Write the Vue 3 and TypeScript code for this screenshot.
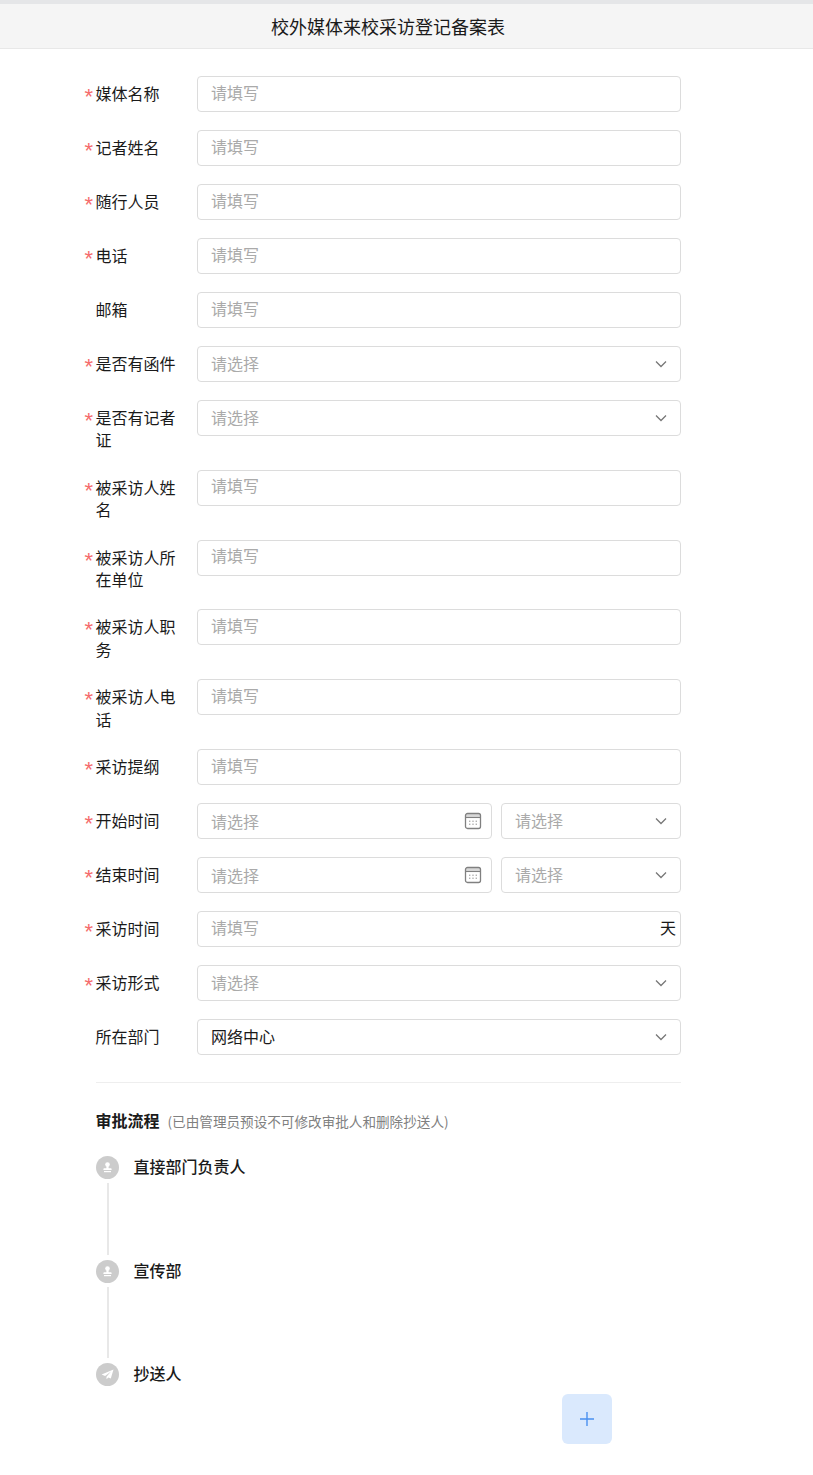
<script setup lang="ts">
type FieldKind = 'input' | 'select' | 'datetime' | 'suffix'

interface Field {
  label: string
  kind: FieldKind
  required?: boolean
  value?: string
}

const fields: Field[] = [
  { label: '媒体名称', kind: 'input', required: true },
  { label: '记者姓名', kind: 'input', required: true },
  { label: '随行人员', kind: 'input', required: true },
  { label: '电话', kind: 'input', required: true },
  { label: '邮箱', kind: 'input' },
  { label: '是否有函件', kind: 'select', required: true },
  { label: '是否有记者证', kind: 'select', required: true },
  { label: '被采访人姓名', kind: 'input', required: true },
  { label: '被采访人所在单位', kind: 'input', required: true },
  { label: '被采访人职务', kind: 'input', required: true },
  { label: '被采访人电话', kind: 'input', required: true },
  { label: '采访提纲', kind: 'input', required: true },
  { label: '开始时间', kind: 'datetime', required: true },
  { label: '结束时间', kind: 'datetime', required: true },
  { label: '采访时间', kind: 'suffix', required: true },
  { label: '采访形式', kind: 'select', required: true },
  { label: '所在部门', kind: 'select', value: '网络中心' }
]

const steps = [
  { name: '直接部门负责人', icon: 'stamp' },
  { name: '宣传部', icon: 'stamp' },
  { name: '抄送人', icon: 'send' }
]
</script>

<template>
  <div class="page">
    <header class="title-bar">校外媒体来校采访登记备案表</header>

    <form class="form" @submit.prevent>
      <div v-for="field in fields" :key="field.label" class="row">
        <label class="label">
          <span v-if="field.required" class="star">*</span>{{ field.label }}
        </label>

        <div class="control">
          <input v-if="field.kind === 'input'" class="box text-input" placeholder="请填写" />

          <div v-else-if="field.kind === 'select'" class="box picker">
            <span :class="field.value ? 'value' : 'hint'">{{ field.value || '请选择' }}</span>
            <svg class="chevron" width="12" height="12" viewBox="0 0 12 12">
              <path d="M1 3.5 6 8.5 11 3.5" fill="none" stroke="#777" stroke-width="1.3" />
            </svg>
          </div>

          <div v-else-if="field.kind === 'suffix'" class="box suffix-box">
            <input class="bare-input" placeholder="请填写" />
            <span class="suffix">天</span>
          </div>

          <div v-else class="date-pair">
            <div class="box picker date">
              <span class="hint date-hint">请选择</span>
              <svg class="calendar" width="18" height="18" viewBox="0 0 18 18">
                <rect x="2" y="2" width="14" height="3.5" fill="#d8d8d8" />
                <rect x="1.5" y="1.5" width="15" height="15" rx="2" fill="none" stroke="#808080" stroke-width="1.3" />
                <path d="M2 5.5h14" stroke="#808080" stroke-width="1.1" />
                <path d="M5 9.2h1.4M8.3 9.2h1.4M11.6 9.2h1.4M5 12.2h1.4M8.3 12.2h1.4M11.6 12.2h1.4" stroke="#909090" stroke-width="1" />
              </svg>
            </div>
            <div class="box picker time">
              <span class="hint">请选择</span>
              <svg class="chevron" width="12" height="12" viewBox="0 0 12 12">
                <path d="M1 3.5 6 8.5 11 3.5" fill="none" stroke="#777" stroke-width="1.3" />
              </svg>
            </div>
          </div>
        </div>
      </div>
    </form>

    <section class="flow">
      <h2 class="flow-title">审批流程<small>(已由管理员预设不可修改审批人和删除抄送人)</small></h2>
      <ul class="steps">
        <li v-for="step in steps" :key="step.name" class="step">
          <span class="dot">
            <svg v-if="step.icon === 'stamp'" width="11" height="11" viewBox="0 0 11 11">
              <circle cx="5.5" cy="2.6" r="2.3" fill="#fff" />
              <path d="M4.6 4h1.8l.3 2.2h2.2c.4 0 .7.3.7.7v1H1.4v-1c0-.4.3-.7.7-.7h2.2Z" fill="#fff" />
              <rect x="2" y="9" width="7" height="1.2" fill="#fff" />
            </svg>
            <svg v-else width="13" height="13" viewBox="0 0 13 13">
              <path d="M12.5 1.5 .6 6.4l3.5 1.5L10 3.6 5.5 8.7v2.6l1.9-1.9 2.4 1.1Z" fill="#fff" />
            </svg>
          </span>
          <span class="step-name">{{ step.name }}</span>
        </li>
      </ul>
    </section>

    <button class="fab" type="button" aria-label="添加">
      <svg width="14" height="14" viewBox="0 0 14 14">
        <path d="M7 0v14M0 7h14" stroke="#4a90f0" stroke-width="1.4" />
      </svg>
    </button>
  </div>
</template>

<style scoped>
* {
  box-sizing: border-box;
}

.page {
  position: relative;
  width: 813px;
  height: 1475px;
  border-top: 4px solid #e5e6e8;
  background: #fff;
  color: #1a1a1a;
  font-family: "Noto Sans CJK SC", "Liberation Sans", sans-serif;
  font-size: 16px;
}

.title-bar {
  height: 45px;
  padding: 0 37px 1px 0;
  border-bottom: 1px solid #e8e8e8;
  background: #f5f5f5;
  font-size: 18px;
  line-height: 44px;
  text-align: center;
}

.form {
  padding: 27px 132px 0 96px;
}

.row {
  display: flex;
  margin-bottom: 18px;
}

.label {
  position: relative;
  flex: none;
  width: 101.5px;
  margin-left: -0.5px;
  padding: 6px 17px 1px 0;
  line-height: 22.4px;
}

.star {
  position: absolute;
  left: -11px;
  top: 10px;
  color: #f56c6c;
  font-family: "Liberation Sans", sans-serif;
  font-size: 22px;
  line-height: 22px;
}

.control {
  flex: 1;
  min-width: 0;
}

.box {
  height: 36px;
  border: 1px solid #dcdcdc;
  border-radius: 4px;
  background: #fff;
}

.text-input,
.bare-input {
  display: block;
  width: 100%;
  border-radius: 4px;
  outline: none;
  color: #1a1a1a;
  font: inherit;
}

.text-input {
  padding: 0 13px 5px;
}

.bare-input {
  flex: 1;
  min-width: 0;
  height: 100%;
  padding: 0 0 5px 13px;
  border: 0;
  background: transparent;
}

input::placeholder {
  color: #aaa;
  opacity: 1;
}

.picker {
  display: flex;
  align-items: center;
  justify-content: space-between;
  padding: 0 14px 0 13px;
  line-height: 22px;
}

.picker > span {
  margin-top: -2px;
}

.picker > .date-hint {
  margin-top: 0;
}

.hint {
  color: #aaa;
}

.value {
  color: #1a1a1a;
}

.chevron {
  margin-right: -1px;
}

.calendar {
  margin-right: -4px;
  transform: translateX(1px);
}

.suffix-box {
  display: flex;
  align-items: center;
}

.suffix {
  flex: none;
  padding: 0 4px 0 6px;
  margin-top: -4px;
}

.date-pair {
  display: flex;
  gap: 9px;
}

.date {
  width: 295px;
}

.time {
  flex: 1;
}

.flow {
  margin: 27px 132px 0 96px;
  padding-top: 25px;
  border-top: 1px solid #eee;
}

.flow-title {
  margin: 0 0 0 -0.5px;
  font-size: 16px;
  font-weight: 600;
  line-height: 24px;
}

.flow-title small {
  margin-left: 8px;
  color: #808080;
  font-size: 13.6px;
  font-weight: 400;
}

.steps {
  margin: 23px 0 0;
  padding: 0;
  list-style: none;
}

.step {
  position: relative;
  display: flex;
  align-items: flex-start;
  gap: 14.5px;
  height: 103.5px;
}

.step:not(:last-child)::after {
  content: "";
  position: absolute;
  left: 11px;
  top: 27px;
  width: 2px;
  height: 71.5px;
  background: #e8e8e8;
}

.dot {
  display: flex;
  align-items: center;
  justify-content: center;
  width: 23px;
  height: 23px;
  border-radius: 50%;
  background: #ccc;
}

.step-name {
  font-weight: 500;
  line-height: 21px;
}

.fab {
  position: absolute;
  left: 562px;
  top: 1390px;
  display: flex;
  align-items: center;
  justify-content: center;
  width: 50px;
  height: 50px;
  padding: 0;
  border: 0;
  border-radius: 6px;
  background: #dae9fd;
}
</style>
